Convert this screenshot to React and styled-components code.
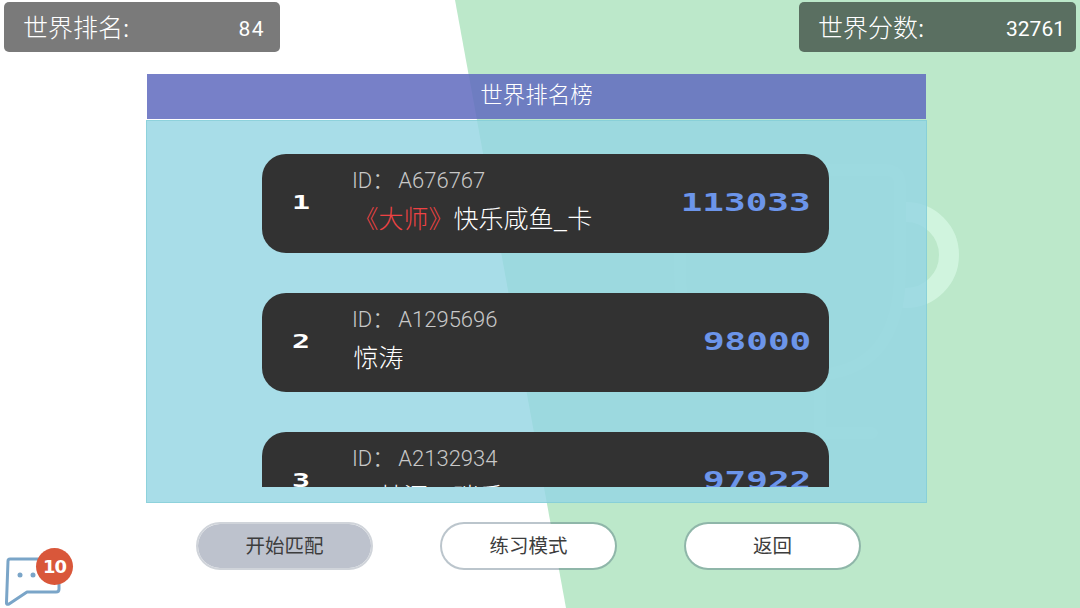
import React from 'react'
import styled, { createGlobalStyle } from 'styled-components'

const GlobalStyle = createGlobalStyle`
  html, body {
    margin: 0;
    padding: 0;
    background: #fff;
  }
`

const CJK = `"Noto Sans CJK SC", "Noto Sans", sans-serif`

const Page = styled.div`
  position: relative;
  width: 1080px;
  height: 608px;
  overflow: hidden;
  background: #fff;
  font-family: ${CJK};
  display: flex;
  flex-direction: column;

  &::before {
    content: '';
    position: absolute;
    inset: 0;
    background: #bce8ca;
    clip-path: polygon(455px 0, 100% 0, 100% 100%, 566px 100%);
  }
`

const Watermark = styled.svg`
  position: absolute;
  left: 660px;
  top: 140px;
`

const TopBar = styled.header`
  position: relative;
  display: flex;
  justify-content: space-between;
  padding: 2px 4px 0;
  height: 50px;
  flex-shrink: 0;
`

const StatChip = styled.div`
  width: ${props => props.$width}px;
  height: 50px;
  box-sizing: border-box;
  padding: 0 11px 3px 19px;
  border-radius: 5px;
  background: rgba(0, 0, 0, 0.52);
  color: #fff;
  display: flex;
  align-items: center;
  justify-content: space-between;
`

const StatLabel = styled.span`
  font-size: 25px;
  font-weight: 300;
`

const StatValue = styled.span`
  padding: 7px ${props => props.$inset}px 0 0;
  font-family: Roboto, sans-serif;
  font-size: 21px;
  font-weight: 400;
  letter-spacing: ${props => props.$spacing}px;
`

const Panel = styled.section`
  position: relative;
  width: 779px;
  margin: 22px 0 0 147px;
  flex-shrink: 0;
`

const PanelTitle = styled.h1`
  margin: 0;
  height: 45px;
  background: rgba(99, 109, 192, 0.87);
  color: #fff;
  font-size: 22.5px;
  font-weight: 300;
  line-height: 38px;
  text-align: center;
`

const PanelBody = styled.div`
  height: 383px;
  margin: 1px -1px 0;
  box-sizing: border-box;
  padding-bottom: 15px;
  background: rgba(149, 214, 227, 0.82);
  border: 1px solid rgba(120, 200, 210, 0.55);
`

const RankList = styled.div`
  height: 100%;
  overflow: hidden;
  box-sizing: border-box;
  padding: 33px 97px 0 115px;
  display: flex;
  flex-direction: column;
  gap: 40px;
`

const RankRow = styled.article`
  flex: 0 0 99px;
  border-radius: 24px;
  background: #323232;
  display: flex;
  align-items: flex-start;
  position: relative;
`

const RankNumber = styled.div`
  width: 90px;
  height: 95px;
  flex-shrink: 0;
  padding-left: 30px;
  box-sizing: border-box;
  display: flex;
  align-items: center;
  color: #fff;
  font-family: "DejaVu Sans Mono", monospace;
  font-size: 20px;
  font-weight: 700;

  span {
    display: inline-block;
    transform: scaleX(1.5);
    transform-origin: left center;
  }
`

const PlayerInfo = styled.div`
  flex: 1;
  padding-top: 13px;
  display: flex;
  flex-direction: column;
`

const PlayerId = styled.div`
  color: #c8c8c8;
  font-family: Roboto, ${CJK};
  font-size: 22px;
  font-weight: 300;
  line-height: 28px;
  white-space: pre;
`

const IdValue = styled.span`
  margin-left: 4px;
`

const PlayerName = styled.div`
  margin-top: 4px;
  padding-left: 1.5px;
  color: #fff;
  font-size: 25px;
  font-weight: 300;
  line-height: 36px;
  white-space: pre;
`

const Title = styled.span`
  color: #ee4244;
`

const Score = styled.div`
  position: absolute;
  right: 18px;
  top: 33px;
  color: #6c95ea;
  font-family: "DejaVu Sans Mono", monospace;
  font-size: 24px;
  font-weight: 700;
  line-height: 32px;
  transform: scaleX(1.5);
  transform-origin: right center;
`

const ButtonRow = styled.nav`
  position: relative;
  display: flex;
  gap: 67px;
  padding-left: 196px;
  margin-top: 19px;
`

const PillButton = styled.button`
  width: 177px;
  height: 48px;
  box-sizing: border-box;
  border-radius: 24px;
  border: 2px solid ${props => (props.$active ? '#d0d4da' : 'rgba(60, 90, 110, 0.35)')};
  background: ${props => (props.$active ? '#bdc2cd' : '#fff')};
  background-clip: padding-box;
  color: #3d3d3d;
  font-family: ${CJK};
  font-size: 19.5px;
  font-weight: 400;
  padding: 0 0 4px;
`

const ChatWidget = styled.div`
  position: absolute;
  left: 5px;
  top: 548px;
  width: 70px;
  height: 58px;
`

const ChatBadge = styled.span`
  position: absolute;
  left: 31px;
  top: 0;
  width: 37px;
  height: 37px;
  border-radius: 50%;
  background: #d9573a;
  color: #fff;
  font-family: "DejaVu Sans", sans-serif;
  font-size: 18px;
  font-weight: 700;
  letter-spacing: -1px;
  line-height: 37px;
  text-align: center;
`

const players = [
  { rank: 1, id: 'A676767', title: '《大师》', name: '快乐咸鱼_卡', score: 113033 },
  { rank: 2, id: 'A1295696', name: '惊涛', score: 98000 },
  { rank: 3, id: 'A2132934', name: '一林深一瑞手', score: 97922 },
]

const App = () => {
  return (
    <Page>
      <GlobalStyle />
      <Watermark width="320" height="320" viewBox="0 0 320 320" fill="none">
        <circle cx="246" cy="115" r="43" stroke="#d0f4de" strokeWidth="20" />
        <path d="M20 30 H225 Q240 30 240 45 V130 Q240 235 150 235 H110 Q20 235 20 130 Z" stroke="#c2ebd0" strokeWidth="12" fill="#bce8ca" />
        <path d="M160 240 V293 H212" stroke="#c2ebd0" strokeWidth="12" strokeLinecap="round" />
      </Watermark>
      <TopBar>
        <StatChip $width={276}>
          <StatLabel>世界排名:</StatLabel>
          <StatValue $inset={4} $spacing={1.5}>84</StatValue>
        </StatChip>
        <StatChip $width={277}>
          <StatLabel>世界分数:</StatLabel>
          <StatValue $inset={0} $spacing={0}>32761</StatValue>
        </StatChip>
      </TopBar>
      <Panel>
        <PanelTitle>世界排名榜</PanelTitle>
        <PanelBody>
          <RankList>
            {players.map(p => (
              <RankRow key={p.rank}>
                <RankNumber><span>{p.rank}</span></RankNumber>
                <PlayerInfo>
                  <PlayerId>ID：<IdValue>{p.id}</IdValue></PlayerId>
                  <PlayerName>
                    {p.title && <Title>{p.title}</Title>}
                    {p.name}
                  </PlayerName>
                </PlayerInfo>
                <Score>{p.score}</Score>
              </RankRow>
            ))}
          </RankList>
        </PanelBody>
      </Panel>
      <ButtonRow>
        <PillButton $active>开始匹配</PillButton>
        <PillButton>练习模式</PillButton>
        <PillButton>返回</PillButton>
      </ButtonRow>
      <ChatWidget>
        <svg width="56" height="58" viewBox="0 0 56 58" fill="none">
          <path d="M5 11 H54 V41 Q54 44 51 44 H22 L4 56 Q1 57 1.5 54 L3 13 Q3 11 5 11 Z" stroke="#7aa5c8" strokeWidth="3" strokeLinejoin="round" />
          <circle cx="15" cy="27" r="2.5" fill="#7aa5c8" />
          <circle cx="28" cy="27" r="2.5" fill="#7aa5c8" />
        </svg>
        <ChatBadge>10</ChatBadge>
      </ChatWidget>
    </Page>
  )
}

export default App
